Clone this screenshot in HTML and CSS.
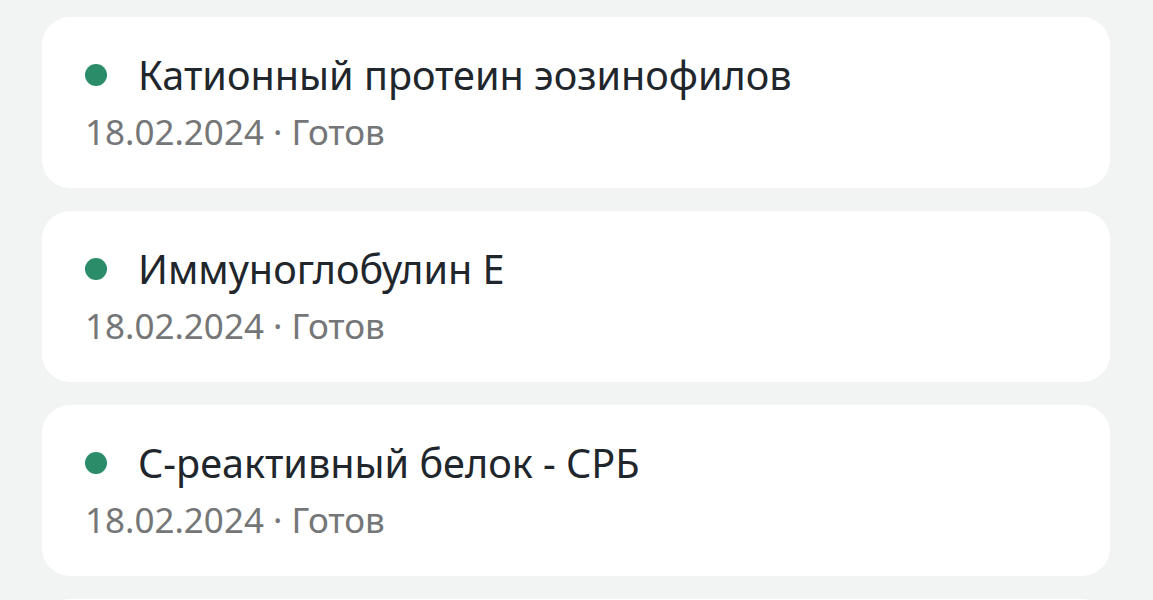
FILE: index.html
```html
<!DOCTYPE html>
<html lang="ru">
<head>
<meta charset="utf-8">
<link rel="stylesheet" href="styles.css">
</head>
<body>
<div class="list">
  <div class="card">
    <div class="title-row"><span class="dot"></span><span class="title">Катионный протеин эозинофилов</span></div>
    <div class="meta">18.02.2024 · Готов</div>
  </div>
  <div class="card">
    <div class="title-row"><span class="dot"></span><span class="title">Иммуноглобулин E</span></div>
    <div class="meta">18.02.2024 · Готов</div>
  </div>
  <div class="card">
    <div class="title-row"><span class="dot"></span><span class="title">С-реактивный белок - СРБ</span></div>
    <div class="meta">18.02.2024 · Готов</div>
  </div>
  <div class="card"></div>
</div>
</body>
</html>
```
FILE: styles.css
```css
html, body {
  margin: 0;
  padding: 0;
  background: #f1f4f3;
}
body {
  font-family: "Noto Sans", "Open Sans", sans-serif;
  height: 600px;
  overflow: hidden;
}
.list {
  display: flex;
  flex-direction: column;
  gap: 23px;
  padding: 17px 43px 0 42px;
}
.card {
  background: #ffffff;
  border-radius: 28px;
  height: 171px;
  flex: none;
  box-sizing: border-box;
  padding: 34px 43px 0 43px;
}
.title-row {
  display: flex;
  align-items: center;
  gap: 31px;
  height: 48px;
}
.dot {
  width: 22px;
  height: 22px;
  border-radius: 50%;
  background: #2a8c69;
  flex: none;
}
.title {
  font-size: 39.6px;
  line-height: 48px;
  color: #20262b;
}
.meta {
  margin-top: 13px;
  font-size: 35px;
  line-height: 40px;
  color: #747677;
}
```
